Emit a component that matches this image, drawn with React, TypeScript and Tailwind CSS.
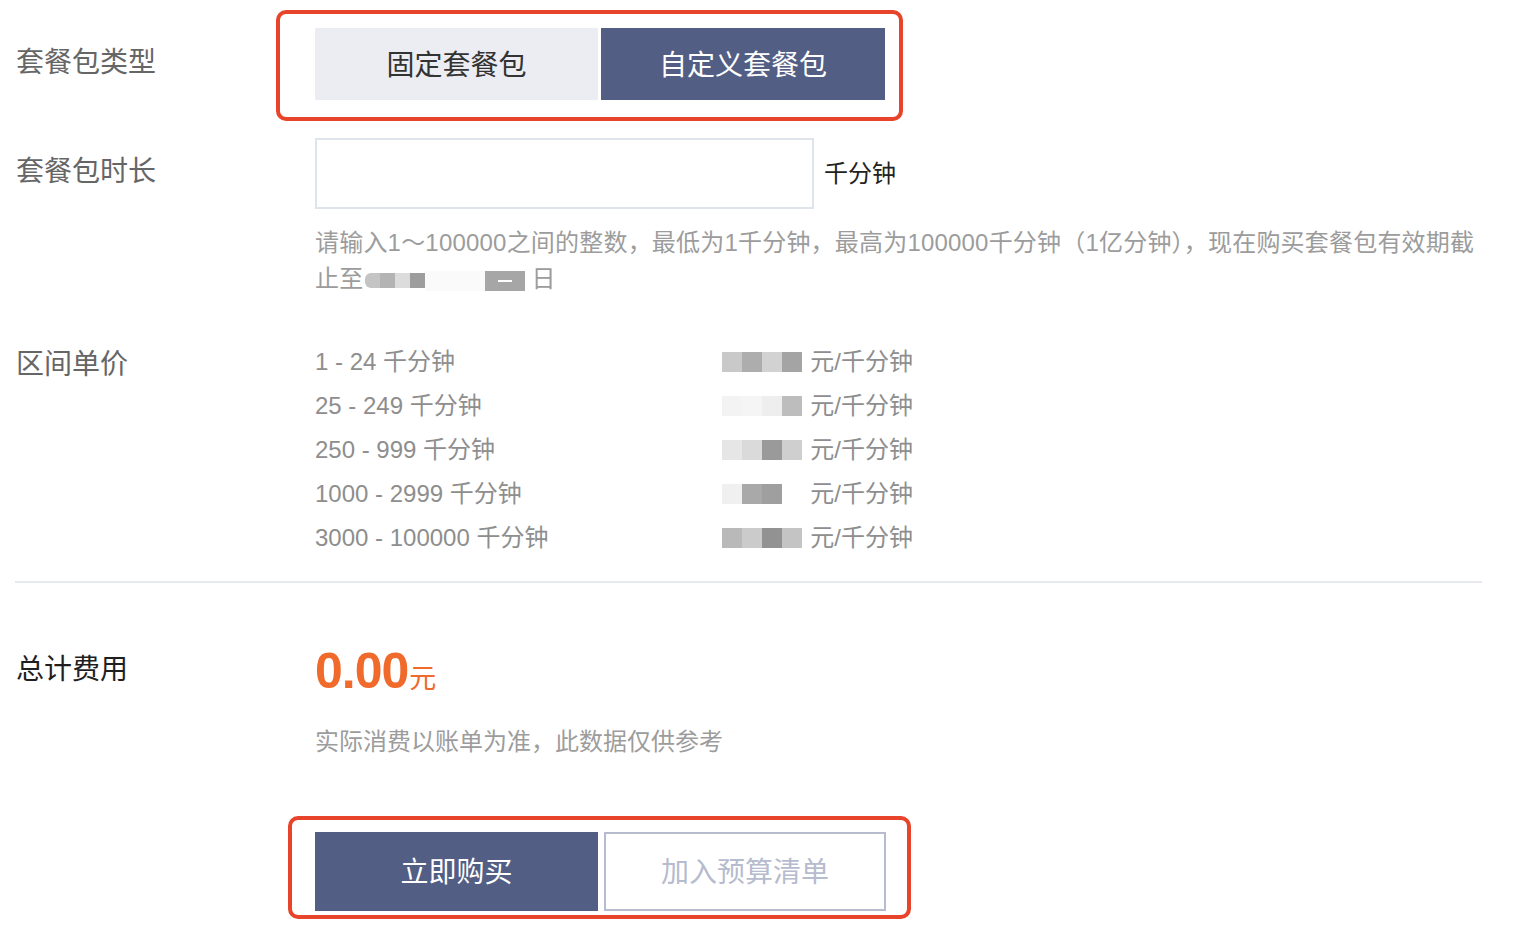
import type { ReactNode } from "react";

const FONT = "font-['Liberation_Sans','Noto_Sans_CJK_SC',sans-serif]";

const tiers = [
  { range: "1 - 24 千分钟", shades: ["#c9c9c9", "#adadad", "#d2d2d2", "#a4a4a4"] },
  { range: "25 - 249 千分钟", shades: ["#f3f3f3", "#f5f5f5", "#eeeeee", "#bdbdbd"] },
  { range: "250 - 999 千分钟", shades: ["#e6e6e6", "#dadada", "#9a9a9a", "#cfcfcf"] },
  { range: "1000 - 2999 千分钟", shades: ["#f0f0f0", "#a9a9a9", "#9f9f9f", "#ffffff"] },
  { range: "3000 - 100000 千分钟", shades: ["#b9b9b9", "#cbcbcb", "#929292", "#c4c4c4"] },
];

// pixelated blur, stands in for masked values
const Mosaic = ({ shades, size = 20 }: { shades: string[]; size?: number }) => (
  <span className="inline-flex align-middle shrink-0">
    {shades.map((c, i) => (
      <span key={i} style={{ background: c, width: size, height: size }} />
    ))}
  </span>
);

const Row = ({ label, labelClass = "text-[#666]", children, className = "" }: {
  label: string;
  labelClass?: string;
  children: ReactNode;
  className?: string;
}) => (
  <div className={`flex ${className}`}>
    <div className={`w-[299px] shrink-0 text-[28px] leading-[40px] ${labelClass}`}>{label}</div>
    <div className="flex-1">{children}</div>
  </div>
);

export default function App() {
  return (
    <div className={`${FONT} bg-white w-[1530px] h-[940px] pl-4 pt-[28px] overflow-hidden`}>
      {/* package type */}
      <Row label="套餐包类型" labelClass="text-[#666] pt-[15px]">
        <div className="relative inline-flex gap-[3px]">
          <div className="absolute -left-[39px] -top-[18px] w-[627px] h-[111px] border-[4px] border-[#e8442b] rounded-[10px]" />
          <button className="w-[283px] h-[72px] pt-[4px] bg-[#ecedf2] text-[#333] text-[28px]">固定套餐包</button>
          <button className="w-[284px] h-[72px] pt-[4px] bg-[#525e84] text-white text-[28px]">自定义套餐包</button>
        </div>
      </Row>

      {/* duration */}
      <Row label="套餐包时长" labelClass="text-[#666] pt-[14px]" className="mt-[38px]">
        <div className="flex items-center">
          <input className="w-[499px] h-[71px] border-2 border-[#dfe3ea] outline-none px-3 text-[24px]" />
          <span className="ml-[10px] text-[24px] text-[#222]">千分钟</span>
        </div>
        <div className="mt-[16px] text-[24px] leading-[36px] tracking-[0.2px] text-[#9c9c9c] whitespace-nowrap">
          请输入1～100000之间的整数，最低为1千分钟，最高为100000千分钟（1亿分钟），现在购买套餐包有效期截
          <br />
          止至
          <span className="inline-flex items-center align-middle ml-[2px]">
            <span className="inline-flex rounded-l-[6px] overflow-hidden">
              <Mosaic shades={["#c4c4c4", "#b3b3b3", "#dcdcdc", "#9d9d9d"]} size={15} />
            </span>
            <span className="w-[60px] h-[20px] bg-[#fafafa]" />
            <span className="w-[40px] h-[20px] bg-[#a6a6a6] flex items-center justify-center">
              <span className="w-[14px] h-[2px] bg-white" />
            </span>
          </span>
          <span className="ml-[6px]">日</span>
        </div>
      </Row>

      {/* tier prices */}
      <Row label="区间单价" labelClass="text-[#666] pt-[5px]" className="mt-[43px]">
        <div className="grid grid-cols-[407px_191px] text-[24px] leading-[44px] text-[#8e8e8e]">
          {tiers.map((t) => (
            <div key={t.range} className="contents">
              <div className="whitespace-nowrap">{t.range}</div>
              <div className="flex items-center justify-between">
                <Mosaic shades={t.shades} />
                <span className="whitespace-nowrap">元/千分钟</span>
              </div>
            </div>
          ))}
        </div>
      </Row>

      <div className="mt-[21px] -ml-px w-[1467px] h-[2px] bg-[#e6e9ee]" />

      {/* total */}
      <Row label="总计费用" labelClass="text-[#1f1f1f]" className="mt-[67px]">
        <div className="flex items-baseline text-[#f06a2b] h-[40px] mt-[1px]">
          <span className="text-[50px] font-semibold leading-[40px] tracking-[-1px]">0.00</span>
          <span className="text-[27px] leading-[40px] ml-[1px]">元</span>
        </div>
        <div className="mt-[33px] text-[24px] leading-[36px] text-[#9c9c9c]">实际消费以账单为准，此数据仅供参考</div>
        <div className="relative mt-[72px] inline-flex gap-[6px]">
          <div className="absolute -left-[27px] -top-[16px] w-[623px] h-[103px] border-[4px] border-[#e8442b] rounded-[10px]" />
          <button className="w-[283px] h-[79px] pt-[3px] bg-[#525e84] text-white text-[28px]">立即购买</button>
          <button className="w-[282px] h-[79px] pt-[3px] border-2 border-[#b6bbce] text-[#b6bbce] text-[28px] bg-white">加入预算清单</button>
        </div>
      </Row>
    </div>
  );
}
